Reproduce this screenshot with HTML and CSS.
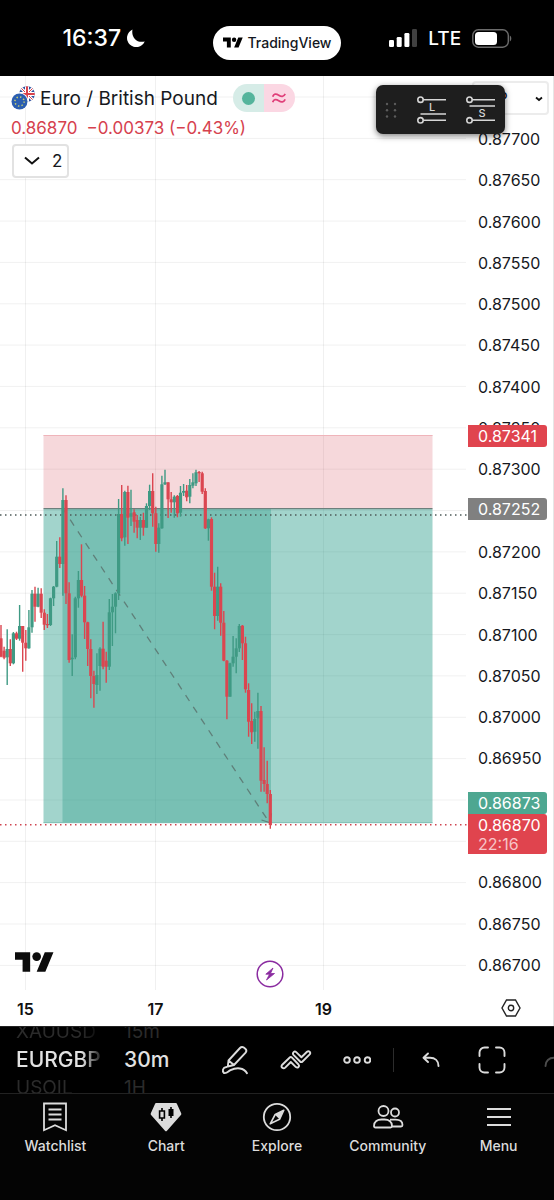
FILE: index.html
```html
<!DOCTYPE html>
<html lang="en">
<head>
    <meta charset="UTF-8">
    <meta name="viewport" content="width=device-width, initial-scale=1.0">
    <title>EURGBP | TradingView</title>
    <link rel="stylesheet" href="styles.css">
</head>
<body>
    <header class="status-bar">
        <div class="status-side">
            <span class="clock">16:37</span>
            <svg class="moon" width="19" height="19" viewBox="0 0 19 19"><path d="M6.500 .5A9.200 9.200 0 1 0 18.700 12.500C10.500 14.500 5 8 6.500 .5z" fill="#fff"/></svg>
        </div>
        <div class="app-pill">
            <svg width="20" height="11" viewBox="0 4 36 18"><path d="M14 22H7V11H0V4h14zM28 22h-8l7.5-18h8z"/><circle cx="20" cy="8" r="4"/></svg>
            <span>TradingView</span>
        </div>
        <div class="status-side status-right">
            <svg width="28" height="18" viewBox="0 0 28 18" fill="#fff">
                <rect x="0" y="11" width="5" height="7" rx="1.3"/>
                <rect x="7.7" y="8" width="5" height="10" rx="1.3"/>
                <rect x="15.4" y="4" width="5" height="14" rx="1.3"/>
                <rect x="23" y="0" width="5" height="18" rx="1.3" opacity=".25"/>
            </svg>
            <span class="network">LTE</span>
            <svg width="40" height="19" viewBox="0 0 40 19">
                <rect x=".8" y=".8" width="35.5" height="17.4" rx="5.5" fill="none" stroke="#6b6b6b" stroke-width="1.4"/>
                <rect x="3" y="3" width="22" height="13" rx="3.5" fill="#fff"/>
                <path d="M37.8 6.5c2 1 2 5 0 6z" fill="#6b6b6b"/>
            </svg>
        </div>
    </header>

    <main class="chart">
        <div class="plot">
            <svg class="plot-canvas" viewBox="0 0 468 914">
                <g id="grid" stroke="#000" stroke-opacity=".06"></g>
                <g class="zones">
                    <rect x="43.5" y="359" width="389" height="74" fill="#cf3040" fill-opacity=".19"/>
                    <path d="M43.5 359.5h389" stroke="#efb4ba"/>
                    <rect x="43.5" y="433" width="389" height="314" fill="#16937f" fill-opacity=".4"/>
                    <rect x="62.5" y="433" width="208.5" height="314" fill="#16937f" fill-opacity=".3"/>
                    <path d="M43.5 432.7h389" stroke="#6d7f7c" stroke-width="1.2"/>
                    <path d="M43.5 746.7h389" stroke="#7fbfb4"/>
                </g>
                <path d="M0 439h468" stroke="#4d5a58" stroke-width="1.5" stroke-dasharray="1.5 3.5"/>
                <path d="M0 748.7h468" stroke="#cf4550" stroke-width="1.5" stroke-dasharray="1.5 3.5"/>
                <path d="M62.5 432L269 746" stroke="#5f7f79" stroke-width="1.3" stroke-dasharray="7 7"/>
                <path d="M261.5 744l8 2.5 2-9" fill="none" stroke="#5f7f79" stroke-width="1.2"/>
                <g id="candles"></g>
            </svg>

            <svg class="plot-logo" width="39" height="20" viewBox="0 4 36 18"><path d="M14 22H7V11H0V4h14zM28 22h-8l7.5-18h8z" fill="#0c0c0c"/><circle cx="20" cy="8" r="4" fill="#0c0c0c"/></svg>
            <button class="flash-btn" title="Latest news">
                <svg width="28" height="28" viewBox="0 0 28 28"><circle cx="14" cy="14" r="12.8" fill="#fff" stroke="#8a2ba0" stroke-width="1.5"/><path d="M17 8l-7.200 6.200h3.700L10.500 20l8-6.500h-4z" fill="#8a2ba0" stroke="#8a2ba0" stroke-width=".8" stroke-linejoin="round"/></svg>
            </button>
        </div>

        <div class="price-axis">
            <ul class="ticks">
                <li>0.87700</li>
                <li>0.87650</li>
                <li>0.87600</li>
                <li>0.87550</li>
                <li>0.87500</li>
                <li>0.87450</li>
                <li>0.87400</li>
                <li>0.87350</li>
                <li>0.87300</li>
                <li></li>
                <li>0.87200</li>
                <li>0.87150</li>
                <li>0.87100</li>
                <li>0.87050</li>
                <li>0.87000</li>
                <li>0.86950</li>
                <li></li>
                <li></li>
                <li>0.86800</li>
                <li>0.86750</li>
                <li>0.86700</li>
            </ul>
            <span class="tag tag-stop">0.87341</span>
            <span class="tag tag-entry">0.87252</span>
            <span class="tag tag-target">0.86873</span>
            <span class="tag tag-last">0.86870<small>22:16</small></span>
            <select class="currency" aria-label="Currency">
                <option>GBP</option>
            </select>
            <svg class="currency-arrow" width="8" height="6" viewBox="0 0 8 6"><path d="M1 1.5l3 2.500 3-2.500" fill="none" stroke="#111" stroke-width="1.8"/></svg>
        </div>

        <div class="time-axis">
            <svg viewBox="0 0 468 36">
                <g class="time-labels">
                    <text x="25.5" y="25">15</text>
                    <text x="155.5" y="25">17</text>
                    <text x="323.5" y="25">19</text>
                </g>
            </svg>
        </div>
        <button class="axis-settings" title="Chart settings">
            <svg width="20" height="18" viewBox="0 0 20 18" fill="none" stroke="#222" stroke-width="1.4"><path d="M5.5 1h9L19 9l-4.500 8h-9L1 9z"/><circle cx="10" cy="9" r="2.7"/></svg>
        </button>

        <section class="legend">
            <div class="symbol-row">
                <svg width="24" height="24" viewBox="0 0 24 24">
                    <clipPath id="uk"><circle cx="16" cy="8" r="7.8"/></clipPath>
                    <g clip-path="url(#uk)">
                        <rect x="8" width="16" height="16" fill="#2d4f9e"/>
                        <path d="M8 0l16 16M24 0L8 16" stroke="#fff" stroke-width="3"/>
                        <path d="M8 0l16 16M24 0L8 16" stroke="#d8414b" stroke-width="1"/>
                        <path d="M16 0v16M8 8h16" stroke="#fff" stroke-width="4"/>
                        <path d="M16 0v16M8 8h16" stroke="#d8414b" stroke-width="2"/>
                    </g>
                    <circle cx="8.5" cy="15.5" r="9" fill="#fff"/>
                    <circle cx="8.5" cy="15.5" r="8" fill="#2b5eb0"/>
                    <circle cx="8.5" cy="15.5" r="4.6" fill="none" stroke="#c9cf6c" stroke-width="1.5" stroke-dasharray="1.4 2.21"/>
                </svg>
                <h1>Euro / British Pound</h1>
                <div class="market-pill">
                    <span class="market-open"></span>
                    <span class="market-approx"><svg width="14" height="12" viewBox="0 0 14 12" fill="none" stroke="#e0407a" stroke-width="1.8"><path d="M.7 4.800c1-3 3.300-3.300 6-1.600s5 1.600 6.500-1.400M.7 10.300c1-3 3.300-3.300 6-1.600s5 1.600 6.500-1.400"/></svg></span>
                </div>
            </div>
            <p class="quote"><span>0.86870</span><span>−0.00373 (−0.43%)</span></p>
            <button class="indicators">
                <svg width="16" height="10" viewBox="0 0 16 10"><path d="M1 1.5l7 6 7-6" fill="none" stroke="#111" stroke-width="2"/></svg>
                <span>2</span>
            </button>
        </section>

        <div class="favorites">
            <svg width="12" height="18" viewBox="0 0 12 18" fill="#5c5c5c">
                <circle cx="2" cy="3" r="1.2"/><circle cx="10" cy="3" r="1.2"/>
                <circle cx="2" cy="9.3" r="1.2"/><circle cx="10" cy="9.3" r="1.2"/>
                <circle cx="2" cy="15.5" r="1.2"/><circle cx="10" cy="15.5" r="1.2"/>
            </svg>
            <button title="Long position">
                <svg width="29" height="28" viewBox="0 0 29 28" fill="none" stroke="#d6d6d6" stroke-width="1.6"><circle cx="3.5" cy="3.7" r="2.7"/><path d="M6.200 3.700H29M3.500 18H29M6.200 24.300H29"/><circle cx="3.5" cy="24.3" r="2.7"/><text x="12" y="14.5">L</text></svg>
            </button>
            <button title="Short position">
                <svg width="29" height="28" viewBox="0 0 29 28" fill="none" stroke="#d6d6d6" stroke-width="1.6"><circle cx="3.5" cy="3.7" r="2.7"/><path d="M6.200 3.700H29M3.500 10H29M6.200 24.300H29"/><circle cx="3.5" cy="24.3" r="2.7"/><text x="12.5" y="21">S</text></svg>
            </button>
        </div>
    </main>

    <div class="toolbar">
        <div class="wheel wheel-symbol">
            <span>XAUUSD</span>
            <strong>EURGBP</strong>
            <span>USOIL</span>
        </div>
        <div class="wheel wheel-interval">
            <span>15m</span>
            <strong>30m</strong>
            <span>1H</span>
        </div>
        <button title="Drawings">
            <svg width="28" height="30" viewBox="0 0 28 30"><path d="M7.500 15.500L19 3c1.200-1.300 2.500-1.400 3.800-.4l1.500 1.200c1.300 1.200 1.400 2.500.3 3.800L13 20l-6.200 1.500zM7.500 15.500l5.500 4.500"/><path d="M5.500 22C1.500 22.500 1 26 3 28c3 .8 4-1.500 6.500-2.800 6-3 13.500-2.700 16.500 3"/></svg>
        </button>
        <button title="Indicators">
            <svg width="32" height="20" viewBox="0 0 32 20"><path d="M2 15l7.500-7.300c.8-.8 1.700-.8 2.500 0l6.500 6.800c1.500 1.900-.8 4-2.600 2.600L10.800 12l-5.600 5.600C3.300 19.300.3 17 2 15zM13.500 4.800c-1.600-2 1-4.300 2.700-2.700l5.200 5.100L27 1.700c1.900-1.500 4.200.8 2.700 2.600L22.500 11.500c-.8.8-1.700.8-2.400 0z"/></svg>
        </button>
        <button title="More">
            <svg width="28" height="8" viewBox="0 0 28 8"><circle cx="4" cy="4" r="2.8"/><circle cx="14" cy="4" r="2.8"/><circle cx="24.5" cy="4" r="2.8"/></svg>
        </button>
        <span class="divider"></span>
        <button title="Undo">
            <svg width="18" height="16" viewBox="0 0 18 16"><path d="M6 1.500L1.500 5.800l4.500 4.200M1.800 5.800H8c5 0 8.500 3.200 8.500 8.200"/></svg>
        </button>
        <button title="Full screen">
            <svg width="28" height="28" viewBox="0 0 28 28"><path d="M1.500 10V6.500a5 5 0 0 1 5-5H10M18 1.500h3.500a5 5 0 0 1 5 5V10M26.500 18v3.500a5 5 0 0 1-5 5H18M10 26.500H6.500a5 5 0 0 1-5-5V18"/></svg>
        </button>
        <button class="faded" title="Redo">
            <svg width="18" height="16" viewBox="0 0 18 16"><path d="M12 1.500l4.500 4.300L12 10M16.200 5.800H10c-5 0-8.500 3.200-8.500 8.200"/></svg>
        </button>
    </div>

    <nav class="tabs">
        <a href="#watchlist">
            <svg width="28" height="30" viewBox="0 0 28 30" fill="none" stroke="#dcdcdc" stroke-width="1.8"><path d="M3 1.500h22v26.700l-11-5-11 5zM7.500 7.500h13M7.500 12.500h13M7.500 17.500h13"/></svg>
            Watchlist
        </a>
        <a href="#chart">
            <svg width="32" height="30" viewBox="0 0 32 30"><path d="M6.500 1h19c.8 0 1.200.3 1.500 1l4.200 9.300c.3.700.2 1.200-.3 1.700L17 28.700c-.7.700-1.300.7-2 0L1.100 13c-.5-.5-.6-1-.3-1.700L5 2c.3-.7.700-1 1.500-1z" fill="#dcdcdc"/><path d="M12 6v3M12 16v3M21 5v11" stroke="#000" stroke-width="1.6"/><path d="M9.600 9h4.800v7H9.600z" fill="none" stroke="#000" stroke-width="1.6"/><path d="M18.500 7h5v7h-5z"/></svg>
            Chart
        </a>
        <a href="#explore">
            <svg width="30" height="30" viewBox="0 0 30 30"><circle cx="15" cy="15" r="13.2" fill="none" stroke="#dcdcdc" stroke-width="1.8"/><path d="M21.800 8.200l-8.600 4.300-5 9.300 9.300-4.500z" fill="none" stroke="#dcdcdc" stroke-width="1.6" stroke-linejoin="round"/><path d="M22 8l-9.200 4.500 4.900 5z" fill="#dcdcdc"/></svg>
            Explore
        </a>
        <a href="#community">
            <svg width="32" height="30" viewBox="0 0 32 30" fill="none" stroke="#dcdcdc" stroke-width="1.8"><circle cx="11.5" cy="9" r="5"/><circle cx="23" cy="10.5" r="4"/><path d="M2 24c0-4.500 3.500-6.500 7.500-6.500h3c4 0 7.500 2 7.500 6.500 0 1-.7 1.500-1.500 1.500h-15C2.500 25.500 2 25 2 24zM18 17.700h5.500c4 0 7 1.800 7 5.300 0 1-.6 1.500-1.500 1.500h-9"/></svg>
            Community
        </a>
        <a href="#menu">
            <svg width="28" height="30" viewBox="0 0 28 30" fill="none" stroke="#dcdcdc" stroke-width="2"><path d="M2 7h24M2 15h24M2 23h24"/></svg>
            Menu
        </a>
    </nav>

    <script src="chart.js"></script>
</body>
</html>
```

FILE: styles.css
```css
:root {
    --red: #e0444e;
    --green: #4ea791;
    --gray: #808080;
    --ink: #16181d;
    --icon: #dcdcdc;
}

* {
    margin: 0;
    padding: 0;
    box-sizing: border-box;
}

body {
    display: flex;
    flex-direction: column;
    min-height: 100vh;
    background: #000;
    color: var(--ink);
    font-family: Inter, "Liberation Sans", sans-serif;
    overflow-x: hidden;
}

button {
    background: none;
    border: none;
    color: inherit;
    font-family: inherit;
    cursor: pointer;
}

svg {
    display: block;
}

/* Phone status bar */
.status-bar {
    display: grid;
    grid-template-columns: 1fr auto 1fr;
    align-items: center;
    height: 76px;
    color: #fff;
}

.status-side {
    display: flex;
    justify-content: center;
    align-items: center;
    gap: 5px;
    padding-right: 5px;
}

.status-right {
    gap: 11px;
    padding: 0 0 0 6px;
}

.clock {
    font-size: 23px;
    font-weight: 500;
}

.network {
    font-size: 19px;
    font-weight: 500;
}

.app-pill {
    display: flex;
    align-items: center;
    gap: 5px;
    height: 34px;
    margin-top: 9px;
    padding: 0 10px;
    border-radius: 17px;
    background: #fff;
    color: #131722;
    font-size: 14px;
    font-weight: 500;
}

/* Chart */
.chart {
    display: grid;
    grid-template-columns: 1fr 86px;
    position: relative;
    background: #fff;
}

.plot {
    position: relative;
}

.plot-canvas,
.time-axis svg {
    width: 100%;
}

.plot-logo {
    position: absolute;
    left: 15px;
    bottom: 18px;
}

.flash-btn {
    position: absolute;
    left: 256px;
    bottom: 2px;
}

.price-axis {
    position: relative;
    padding: 53px 0 15px;
    border-right: 1px solid #e6e6e6;
    font-size: 16px;
}

.ticks {
    display: flex;
    flex-direction: column;
    justify-content: space-between;
    height: 100%;
    padding-left: 10px;
    list-style: none;
    line-height: 20px;
}

.ticks li {
    height: 20px;
}

.tag {
    position: absolute;
    left: 0;
    width: 79px;
    padding-left: 10px;
    border-radius: 0 3px 3px 0;
    color: #fff;
    line-height: 22px;
}

.tag-stop {
    top: 349px;
    background: var(--red);
}

.tag-entry {
    top: 422px;
    background: var(--gray);
}

.tag-target {
    top: 716px;
    background: var(--green);
}

.tag-last {
    top: 738px;
    padding-bottom: 2px;
    background: var(--red);
}

.tag small {
    display: block;
    color: #f7c5c8;
    font-size: 16px;
    line-height: 16px;
}

.currency {
    position: absolute;
    top: 5px;
    left: 4px;
    width: 77px;
    height: 34px;
    border: 2px solid #ececec;
    border-radius: 4px;
    background: #fff;
    color: var(--ink);
    padding-left: 1px;
    font-family: inherit;
    font-size: 16px;
    appearance: none;
}

.currency-arrow {
    position: absolute;
    top: 20px;
    left: 67px;
    pointer-events: none;
}

.time-labels {
    fill: #111;
    font-size: 16px;
    font-weight: 600;
    text-anchor: middle;
}

.axis-settings {
    display: flex;
    justify-content: center;
    align-items: center;
    border-right: 1px solid #e6e6e6;
}

/* Symbol name and quote over the plot */
.legend {
    position: absolute;
    top: 8px;
    left: 11px;
    display: flex;
    flex-direction: column;
    align-items: flex-start;
}

.symbol-row {
    display: flex;
    align-items: center;
    height: 28px;
}

.symbol-row h1 {
    margin: 0 15px 0 5px;
    font-size: 19px;
    font-weight: 400;
}

.market-pill {
    display: flex;
    height: 28px;
    border-radius: 14px;
    overflow: hidden;
}

.market-open,
.market-approx {
    display: flex;
    justify-content: center;
    align-items: center;
    width: 31px;
    background: #d6ece7;
}

.market-open::before {
    content: '';
    width: 13px;
    height: 13px;
    border-radius: 50%;
    background: #55b49c;
}

.market-approx {
    background: #fbd7e3;
}

.quote {
    display: flex;
    gap: 9px;
    color: #d6414e;
    font-size: 17px;
    line-height: 32px;
}

.indicators {
    display: flex;
    align-items: center;
    gap: 12px;
    height: 34px;
    margin-left: 1px;
    padding: 0 5px 0 10px;
    border: 2px solid #e2e2e2;
    border-radius: 4px;
    background: #fff;
    font-size: 17px;
}

/* Floating favourites panel */
.favorites {
    position: absolute;
    top: 9px;
    right: 49px;
    display: flex;
    align-items: center;
    gap: 20px;
    height: 49px;
    padding: 0 10px 0 9px;
    border-radius: 7px;
    background: #1e1e1e;
    box-shadow: 0 2px 6px rgba(0, 0, 0, 0.5);
}

.favorites text {
    fill: #d6d6d6;
    stroke: none;
    font-size: 11px;
    font-weight: 500;
}

/* Bottom toolbar */
.toolbar {
    display: flex;
    align-items: center;
    height: 67px;
    padding-left: 16px;
    overflow: hidden;
    color: #e2e2e2;
    border-top: 1px solid #222;
}

.toolbar button {
    display: flex;
    flex: 0 0 61px;
    justify-content: center;
}

.toolbar button svg {
    fill: none;
    stroke: var(--icon);
    stroke-width: 1.9;
    stroke-linecap: round;
    stroke-linejoin: round;
}

.toolbar .faded {
    opacity: 0.35;
}

.wheel {
    display: flex;
    flex-direction: column;
    flex-shrink: 0;
    overflow: hidden;
    white-space: nowrap;
    line-height: 28px;
}

.wheel span {
    color: #2b2b2b;
    font-size: 19px;
}

.wheel strong {
    font-size: 21px;
    font-weight: 500;
}

.wheel-symbol {
    width: 88px;
    margin-right: 20px;
    mask-image: linear-gradient(90deg, #000 75%, transparent);
}

.wheel-interval {
    width: 80px;
}

.divider {
    flex: 0 0 1px;
    height: 24px;
    margin: 0 6px;
    background: #2c2c2c;
}

/* Tabs */
.tabs {
    display: grid;
    grid-template-columns: repeat(5, 1fr);
    flex-grow: 1;
    padding-top: 8px;
    border-top: 1px solid #222;
    background: #040404;
}

.tabs a {
    display: flex;
    flex-direction: column;
    align-items: center;
    gap: 5px;
    color: var(--icon);
    font-size: 14px;
    font-weight: 500;
    line-height: 18px;
    text-decoration: none;
}
```

FILE: chart.js
```js
const SVG_NS = 'http://www.w3.org/2000/svg';
const BASE = 344;
const STEP = 3.095;

// Each candle: [up, high, low, body top, body bottom], a third of a pixel per unit
const candles = [
    [0, 615, 712, 655, 710], [0, 680, 718, 692, 713], [1, 628, 795, 687, 712],
    [0, 658, 738, 687, 730], [1, 636, 733, 640, 730], [0, 635, 660, 640, 656],
    [1, 555, 662, 618, 656], [0, 618, 755, 618, 668], [0, 630, 722, 668, 685],
    [1, 570, 686, 622, 685], [1, 510, 638, 521, 622], [0, 500, 605, 521, 560],
    [1, 503, 562, 521, 560], [0, 505, 594, 521, 578], [0, 568, 630, 578, 614],
    [0, 582, 624, 612, 616], [1, 533, 618, 535, 615], [1, 498, 558, 500, 535],
    [1, 363, 502, 410, 500], [0, 352, 444, 410, 432], [1, 205, 527, 240, 432],
    [0, 226, 552, 240, 520], [0, 487, 728, 520, 720], [1, 643, 768, 713, 718],
    [1, 530, 718, 535, 712], [1, 453, 563, 480, 535], [0, 373, 532, 480, 527],
    [0, 498, 657, 527, 607], [0, 605, 738, 607, 687], [0, 658, 835, 687, 768],
    [0, 752, 863, 768, 792], [1, 700, 822, 765, 795], [1, 682, 812, 686, 738],
    [0, 605, 748, 686, 740], [0, 695, 788, 722, 740], [1, 537, 750, 577, 740],
    [1, 522, 678, 560, 577], [1, 517, 640, 520, 560], [1, 237, 540, 282, 520],
    [0, 195, 364, 282, 355], [1, 212, 377, 216, 352], [0, 197, 372, 216, 293],
    [1, 209, 318, 280, 290], [0, 268, 338, 277, 305], [0, 285, 355, 300, 323],
    [1, 290, 360, 300, 323], [0, 278, 347, 300, 323], [1, 250, 323, 258, 323],
    [1, 194, 270, 213, 258], [0, 160, 320, 213, 280], [0, 260, 395, 280, 372],
    [1, 310, 398, 323, 372], [1, 167, 326, 193, 325], [1, 149, 195, 187, 193],
    [0, 187, 294, 187, 238], [0, 216, 278, 238, 247], [1, 226, 293, 230, 247],
    [0, 225, 292, 228, 280], [1, 198, 290, 218, 278], [1, 192, 228, 213, 218],
    [0, 195, 244, 212, 232], [1, 177, 250, 195, 230], [1, 160, 205, 187, 197],
    [1, 149, 198, 157, 190], [0, 153, 186, 156, 160], [0, 155, 222, 160, 215],
    [0, 205, 327, 213, 325], [1, 296, 362, 298, 325], [0, 292, 512, 297, 500],
    [0, 458, 628, 500, 588], [1, 440, 602, 500, 588], [0, 490, 647, 500, 608],
    [0, 573, 724, 608, 722], [0, 720, 898, 722, 830], [1, 728, 830, 730, 830],
    [1, 648, 740, 710, 730], [1, 655, 760, 685, 710], [1, 612, 696, 618, 685],
    [0, 615, 720, 617, 670], [0, 650, 818, 670, 808], [0, 790, 950, 810, 905],
    [0, 850, 972, 903, 937], [1, 875, 965, 897, 935], [1, 818, 986, 873, 895],
    [0, 858, 1115, 873, 1082], [0, 982, 1115, 1080, 1092], [0, 1022, 1150, 1092, 1122],
    [0, 1110, 1226, 1122, 1215]
];

function addLine(parent, d, color, width) {
    const path = document.createElementNS(SVG_NS, 'path');
    path.setAttribute('d', d);
    if (color) {
        path.setAttribute('stroke', color);
        path.setAttribute('stroke-width', width);
    }
    parent.appendChild(path);
}

const grid = document.getElementById('grid');
for (let i = 0; i <= 21; i++) {
    const y = (21 + i * 41.35).toFixed(1);
    addLine(grid, `M0 ${y}H466`);
}
[25.5, 155.5, 323.5].forEach(x => addLine(grid, `M${x} 0V914`));

const layer = document.getElementById('candles');
candles.forEach(([up, high, low, top, bottom], i) => {
    const x = (1 + i * STEP).toFixed(1);
    const y = value => (BASE + value / 3).toFixed(1);
    const color = up ? '#3f9a84' : '#db4650';
    addLine(layer, `M${x} ${y(high)}V${y(low)}`, color, 1.4);
    addLine(layer, `M${x} ${y(top)}V${y(bottom)}`, color, 3.2);
});
```
